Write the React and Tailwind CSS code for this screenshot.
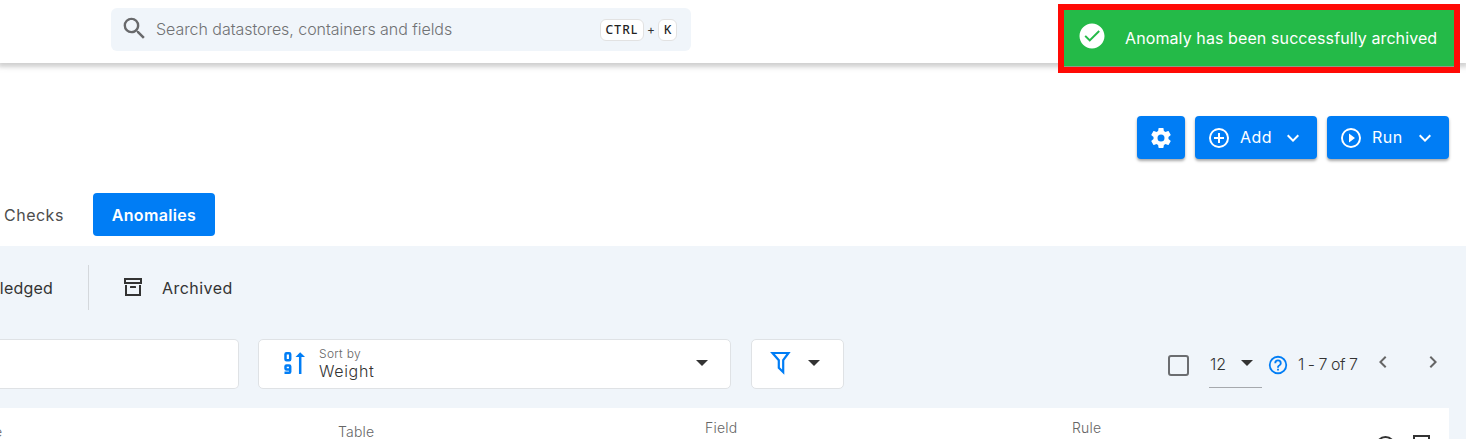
const PATHS = {
  magnify: 'M9.5,3A6.5,6.5 0 0,1 16,9.5C16,11.11 15.41,12.59 14.44,13.73L14.71,14H15.5L20.5,19L19,20.5L14,15.5V14.71L13.73,14.44C12.59,15.41 11.11,16 9.5,16A6.5,6.5 0 0,1 3,9.5A6.5,6.5 0 0,1 9.5,3M9.5,5C7,5 5,7 5,9.5C5,12 7,14 9.5,14C12,14 14,12 14,9.5C14,7 12,5 9.5,5Z',
  check: 'M12 2C6.5 2 2 6.5 2 12S6.5 22 12 22 22 17.5 22 12 17.5 2 12 2M10.2 16.6L6 12.4L7.1 11.3L10.2 14.4L17.2 7.4L18.3 8.5L10.2 16.6Z',
  cog: 'M12,15.5A3.5,3.5 0 0,1 8.5,12A3.5,3.5 0 0,1 12,8.5A3.5,3.5 0 0,1 15.5,12A3.5,3.5 0 0,1 12,15.5M19.43,12.97C19.47,12.65 19.5,12.33 19.5,12C19.5,11.67 19.47,11.34 19.43,11L21.54,9.37C21.73,9.22 21.78,8.95 21.66,8.73L19.66,5.27C19.54,5.05 19.27,4.96 19.05,5.05L16.56,6.05C16.04,5.66 15.5,5.32 14.87,5.07L14.5,2.42C14.46,2.18 14.25,2 14,2H10C9.75,2 9.54,2.18 9.5,2.42L9.13,5.07C8.5,5.32 7.96,5.66 7.44,6.05L4.95,5.05C4.73,4.96 4.46,5.05 4.34,5.27L2.34,8.73C2.21,8.95 2.27,9.22 2.46,9.37L4.57,11C4.53,11.34 4.5,11.67 4.5,12C4.5,12.33 4.53,12.65 4.57,12.97L2.46,14.63C2.27,14.78 2.21,15.05 2.34,15.27L4.34,18.73C4.46,18.95 4.73,19.03 4.95,18.95L7.44,17.94C7.96,18.34 8.5,18.68 9.13,18.93L9.5,21.58C9.54,21.82 9.75,22 10,22H14C14.25,22 14.46,21.82 14.5,21.58L14.87,18.93C15.5,18.67 16.04,18.34 16.56,17.94L19.05,18.95C19.27,19.03 19.54,18.95 19.66,18.73L21.66,15.27C21.78,15.05 21.73,14.78 21.54,14.63L19.43,12.97Z',
  plus: 'M12,20C7.59,20 4,16.41 4,12C4,7.59 7.59,4 12,4C16.41,4 20,7.59 20,12C20,16.41 16.41,20 12,20M12,2A10,10 0 0,0 2,12A10,10 0 0,0 12,22A10,10 0 0,0 22,12A10,10 0 0,0 12,2M13,7H11V11H7V13H11V17H13V13H17V11H13V7Z',
  play: 'M12,20C7.59,20 4,16.41 4,12C4,7.59 7.59,4 12,4C16.41,4 20,7.59 20,12C20,16.41 16.41,20 12,20M12,2A10,10 0 0,0 2,12A10,10 0 0,0 12,22A10,10 0 0,0 22,12A10,10 0 0,0 12,2M10,16.5L16,12L10,7.5V16.5Z',
  down: 'M7.41,8.58L12,13.17L16.59,8.58L18,10L12,16L6,10L7.41,8.58Z',
  left: 'M15.41,16.58L10.83,12L15.41,7.41L14,6L8,12L14,18L15.41,16.58Z',
  right: 'M8.59,16.58L13.17,12L8.59,7.41L10,6L16,12L10,18L8.59,16.58Z',
  archive: 'M20 21H4V10H6V19H18V10H20V21M3 3H21V9H3V3M9.5 11H14.5C14.78 11 15 11.22 15 11.5V13H9V11.5C9 11.22 9.22 11 9.5 11M5 5V7H19V5H5Z',
  caret: 'M6,9L12,15L18,9Z',
  help: 'M11,18H13V16H11V18M12,2A10,10 0 0,0 2,12A10,10 0 0,0 12,22A10,10 0 0,0 22,12A10,10 0 0,0 12,2M12,20C7.59,20 4,16.41 4,12C4,7.59 7.59,4 12,4C16.41,4 20,7.59 20,12C20,16.41 16.41,20 12,20M12,6A4,4 0 0,0 8,10H10A2,2 0 0,1 12,8A2,2 0 0,1 14,10C14,12 11,11.75 11,15H13C13,12.75 16,12.5 16,10A4,4 0 0,0 12,6Z',
};

function Icon({ name, className = 'size-6' }) {
  return (
    <svg viewBox="0 0 24 24" fill="currentColor" fillRule="evenodd" className={'shrink-0 ' + className}>
      <path d={PATHS[name]} />
    </svg>
  );
}

function Header() {
  return (
    <header className="flex h-[63px] shrink-0 items-start bg-white pt-2 pl-[111px] shadow-[0_2px_4px_2px_rgba(0,0,0,0.14),0_2px_8px_2px_rgba(0,0,0,0.06)]">
      <div className="flex h-[43px] w-[580px] items-center rounded-md bg-[#f0f5fa] pr-[14px] pl-[9px]">
        <Icon name="magnify" className="mb-[3px] size-[29px] text-[#68696b]" />
        <span className="mb-[2px] ml-[7px] flex-1 text-base font-light tracking-[-0.05px] text-[#707274]">Search datastores, containers and fields</span>
        <kbd className="flex h-[22px] w-[44px] items-center justify-center rounded-md border border-[#e2e2e2] bg-white font-['Noto_Sans',sans-serif] text-xs font-medium tracking-[1.1px] text-[#222]">CTRL</kbd>
        <span className="w-[14px] text-center text-xs text-[#333]">+</span>
        <kbd className="flex h-[22px] w-[19px] items-center justify-center rounded-md border border-[#e2e2e2] bg-white font-['Noto_Sans',sans-serif] text-xs font-medium text-[#222]">K</kbd>
      </div>
    </header>
  );
}

function Toast() {
  return (
    <div className="absolute top-1 left-[1058px] flex h-[69px] w-[402px] items-center border-6 border-[#ff0a05] bg-[#24ba48] pl-[13px] text-white shadow-[inset_0_-1px_0_#8d9b85]">
      <Icon name="check" className="mb-[6px] size-[30px]" />
      <span className="mb-[2px] ml-[18px] text-base tracking-[0.1px] whitespace-nowrap">Anomaly has been successfully archived</span>
    </div>
  );
}

function ActionButton({ icon, label }) {
  return (
    <button className="flex h-[43px] w-[122px] items-center rounded bg-[#007df5] pl-3 text-white shadow-[0_2px_3px_rgba(0,0,0,0.35)]">
      <Icon name={icon} />
      <span className="mb-[2px] ml-[9px] flex-1 text-left text-base tracking-[0.5px]">{label}</span>
      <Icon name="down" className="mr-3 size-6" />
    </button>
  );
}

function Toolbar() {
  return (
    <div className="flex h-[50px] items-start">
      <div className="h-[50px] w-[239px] shrink-0 rounded-r-[5px] border border-l-0 border-[#dfe2e5] bg-white" />
      <div className="ml-[19px] flex h-[50px] w-[473px] shrink-0 items-center rounded-[5px] border border-[#dfe2e5] bg-white pl-6 text-[#333]">
        <svg viewBox="0 0 22 24" className="mb-[3px] h-6 w-[22px] shrink-0 text-[#007df5]" fill="none" stroke="currentColor" strokeWidth="2.5">
          <path d="M3.5 2.25h2.7q1 0 1 1v5q0 1-1 1H3.5q-1 0-1-1v-5q0-1 1-1zM7.2 18.5H3.5q-1 0-1-1v-2q0-1 1-1h2.7q1 0 1 1v5.2q0 1-1 1H1.5" />
          <path d="M17.2 4v19" />
          <path d="M12.5 6L17.2 1.3L22 6z" fill="currentColor" stroke="none" />
        </svg>
        <div className="ml-[14px] flex-1">
          <div className="text-xs leading-[14px] font-light tracking-[0.3px] text-[#666]">Sort by</div>
          <div className="text-base leading-5 font-light tracking-[0.65px]">Weight</div>
        </div>
        <Icon name="caret" className="mr-4 mb-[2px] size-6" />
      </div>
      <div className="ml-5 flex h-[50px] w-[93px] shrink-0 items-center rounded-[5px] border border-[#dfe2e5] bg-white pl-[18px] text-[#333]">
        <svg viewBox="0 0 22 24" className="mb-[2px] h-6 w-[22px] text-[#007df5]" fill="none" stroke="currentColor" strokeWidth="2.2">
          <path d="M2.5 2h16L13.2 9.2v12L8.8 16.8V9.2z" />
        </svg>
        <Icon name="caret" className="mb-[2px] ml-[10px] size-6" />
      </div>
      <div className="flex flex-1 items-start pt-[11px] pl-[324px] text-[#333]">
        <div className="mt-[5px] size-[21px] shrink-0 rounded-[3px] border-2 border-[#6b6d70]" />
        <div className="ml-5 flex h-[38px] w-[53px] shrink-0 items-start border-b border-[#a6a9ad]">
          <span className="flex-1 pt-[2px] pl-px text-base font-light">12</span>
          <Icon name="caret" className="mt-[1px] mr-[3px] size-6" />
        </div>
        <Icon name="help" className="mt-[4px] ml-[5px] size-[22px] text-[#007df5]" />
        <span className="mt-[2px] ml-[9px] w-[61px] shrink-0 text-base font-light tracking-[-0.5px] whitespace-nowrap">1 - 7 of 7</span>
        <Icon name="left" className="ml-3 size-6 text-[#666]" />
        <Icon name="right" className="ml-[26px] size-6 text-[#666]" />
      </div>
    </div>
  );
}

function TableHead() {
  return (
    <div className="flex h-[31px] w-[1449px] items-start overflow-hidden bg-white text-sm leading-5 font-light tracking-[0.2px] text-[#666]">
      <div className="w-[338px] pt-[14px]"><span className="ml-[-6px]">e</span></div>
      <div className="w-[367px] pt-[14px]">Table</div>
      <div className="w-[367px] pt-[10px]">Field</div>
      <div className="w-[301px] pt-[10px]">Rule</div>
      <svg viewBox="0 0 76 31" className="h-[31px] w-[76px] shrink-0" fill="none" stroke="#333" strokeWidth="2">
        <circle cx="12.5" cy="38" r="9" />
        <path d="M41 31v-3h15v3" />
      </svg>
    </div>
  );
}

export default function App() {
  return (
    <div className="relative flex h-[439px] w-[1466px] flex-col overflow-hidden bg-white font-['Inter',sans-serif]">
      <Header />
      <div className="mt-[53px] flex h-[43px] justify-end gap-[10px] pr-[17px]">
        <button className="flex w-12 items-center justify-center rounded bg-[#007df5] text-white shadow-[0_2px_3px_rgba(0,0,0,0.35)]">
          <Icon name="cog" />
        </button>
        <ActionButton icon="plus" label="Add" />
        <ActionButton icon="play" label="Run" />
      </div>
      <nav className="mt-[34px] flex h-[43px] items-center pl-1 text-base">
        <span className="w-[89px] tracking-[0.5px] text-[#4d4d4d]">Checks</span>
        <span className="flex h-[43px] w-[122px] items-center justify-center rounded bg-[#007df5] font-semibold tracking-[0.35px] text-white">Anomalies</span>
      </nav>
      <main className="mt-[10px] flex h-[193px] flex-col bg-[#f0f5fa]">
        <div className="mt-[19px] flex h-[45px] items-center text-base text-[#333]">
          <span className="w-[53px] shrink-0 text-right tracking-[0.2px]"><span className="-ml-1">ledged</span></span>
          <div className="ml-[35px] h-[45px] w-px bg-[#d4d8dc]" />
          <Icon name="archive" className="mb-px ml-8 size-6" />
          <span className="ml-[17px] tracking-[0.45px]">Archived</span>
        </div>
        <div className="mt-[29px] mb-[19px]"><Toolbar /></div>
        <TableHead />
      </main>
      <Toast />
    </div>
  );
}
